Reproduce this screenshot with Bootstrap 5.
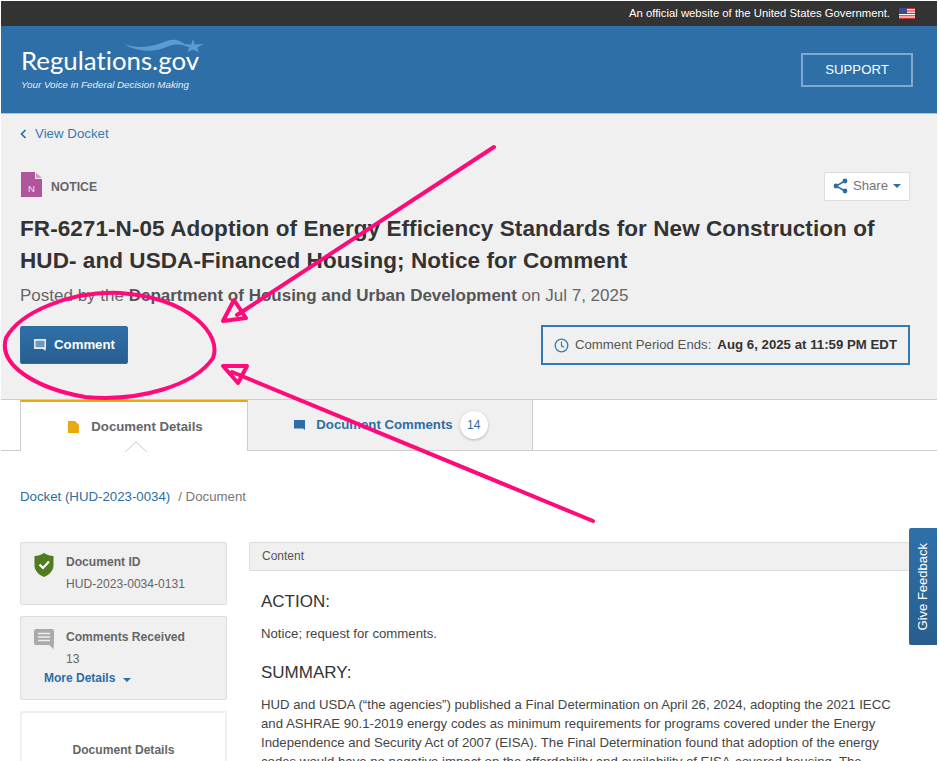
<!DOCTYPE html>
<html lang="en">
<head>
<meta charset="utf-8">
<title>Regulations.gov</title>
<link rel="stylesheet" href="https://cdn.jsdelivr.net/npm/bootstrap@5.3.0/dist/css/bootstrap.min.css">
<style>
html,body{height:761px;overflow:hidden}
body{font-family:"Liberation Sans",Arial,sans-serif;font-size:13.2px;color:#333;background:#fff;padding:1px 2px 0 1px;position:relative}
a{text-decoration:none;color:#2e6da4}
.gov-bar{height:25px;background:#333;color:#fff;font-size:11.3px;padding-right:22px;gap:9px}
.site-head{height:88px;background:#2e6fa8;padding:0 24px 0 20px;border-bottom:1px solid #a9c4dc}
.logo-box{position:relative;width:190px;color:#fff;margin-bottom:3px}
.logo-name{font-family:Lato,"Open Sans",sans-serif;font-weight:400;font-size:25.8px;line-height:30px;font-variant-ligatures:none}
.logo-tag{font-size:9.8px;font-style:italic;line-height:13px;color:#e6eef6;margin-top:3px}
.logo-swoosh{position:absolute;left:101px;top:-9px}
.support-btn{width:112px;height:34px;border:2px solid #82a9cd;color:#fff;font-size:13.2px;border-radius:0}
.hero{background:#f0f0f0;height:286px;padding:0 27px 0 19px;position:relative;border-bottom:1px solid #ccc}
.back-link{font-size:13.3px;padding-top:12px;line-height:16px}
.back-link a{color:#3a78b0}
.back-link svg{margin-right:8px}
.type-row{margin-top:31px;height:26px}
.type-icon{margin-bottom:4px}
.type-label{font-size:12.2px;color:#666;font-weight:700;margin-left:8px;margin-top:3px}
.share-btn{background:#fff;border:1px solid #ddd;height:29px;width:86px;font-size:13.2px;color:#777;gap:5px;border-radius:1px}
.tiny-caret{width:0;height:0;border-left:4px solid transparent;border-right:4px solid transparent;border-top:4px solid currentColor;display:inline-block}
.share-caret{color:#2e6da4}
.doc-title{font-size:22.5px;line-height:32px;font-weight:700;color:#333;margin:14px 0 0 0;letter-spacing:.07px}
.posted{font-size:17px;line-height:20px;color:#666;margin-top:9px}
.posted b{color:#555}
.act-row{margin-top:19px}
.comment-btn{width:108px;height:38px;background:linear-gradient(#2f70a9,#285e8e);border:1px solid #2e6da4;color:#fff;font-weight:700;font-size:13.2px;border-radius:2px;gap:7px}
.period{width:369px;height:40px;border:2px solid #337ab7;font-size:13.2px;color:#555;padding-left:11px;gap:6px;border-radius:0}
.period b{color:#333;margin-left:0;letter-spacing:.03px}
.tab-strip{height:51px;border-bottom:1px solid #ccc;padding-left:19px}
.tab-one{width:228px;background:#fff;border-top:2px solid #e8a90c;border-left:1px solid #ccc;border-right:1px solid #ccc;margin-bottom:-1px;color:#666;font-weight:700;font-size:13.2px;gap:12px;position:relative;padding-left:3px}
.tab-two{width:285px;background:#f0f0f0;border-right:1px solid #ccc;color:#2e6da4;font-weight:700;font-size:13.2px;gap:11px;padding-left:2px}
.count-pill{width:28px;height:28px;border-radius:50%;background:#fff;box-shadow:0 1px 3px rgba(0,0,0,.25);font-weight:400;font-size:12px;margin-left:-4px}
.tab-notch{position:absolute;left:104px;bottom:-1px;width:22px;height:11px}
.crumb{padding:37px 0 0 19px;font-size:13.25px;line-height:17px;color:#777}
.crumb a{margin-right:8px}
.doc-body{padding:37px 0 0 19px;gap:22px}
.side-col{width:207px;flex:none}
.info-box{background:#f0f0f0;border:1px solid #ddd;border-radius:2px;color:#666;font-size:12.1px}
.box-id{height:63px;margin-bottom:11px;padding:11px 0 0 13px;gap:12px}
.shield-icon{margin-top:-1px}
.box-cm{height:84px;margin-bottom:11px;padding:12px 0 0 13px;gap:12px;position:relative}
.info-name{font-weight:700;line-height:17px}
.info-val{line-height:17px;margin-top:5px}
.more-link{position:absolute;left:23px;top:53px;font-weight:700;font-size:12px;line-height:17px}
.box-det{height:80px;background:#fff;border:2px solid #f0f0f0;border-radius:2px;text-align:center;font-weight:700;font-size:12.1px;color:#666;padding-top:28px}
.main-col{flex:1;min-width:0}
.content-head{height:29px;background:#f0f0f0;border:1px solid #ddd;border-right:0;font-size:12px;color:#555;padding:4px 12px;border-radius:2px 0 0 2px;line-height:18px}
.content-txt{padding:21px 41px 0 12px;font-size:13.2px;line-height:19px;color:#444}
.content-txt h2{font-size:17px;font-weight:400;color:#333;line-height:20px;margin:0 0 12px}
.content-txt p{margin:0 0 20px}
.feedback{position:absolute;right:2px;top:528px;width:28px;height:117px;background:linear-gradient(#2f70a9,#285e8e);color:#fff;font-size:13px;border-radius:2px 0 0 2px;writing-mode:vertical-rl}
.feedback span{transform:rotate(180deg);display:block}
.marker-layer{position:absolute;left:0;top:0;pointer-events:none}
</style>
</head>
<body>
<div class="gov-bar d-flex align-items-center justify-content-end">
  <span>An official website of the United States Government.</span>
  <svg width="16" height="11" viewBox="0 0 16 11"><rect width="16" height="11" fill="#fff"/><g fill="#d8302f"><rect width="16" height="1.2"/><rect y="2.4" width="16" height="1.2"/><rect y="4.8" width="16" height="1.2"/><rect y="7.2" width="16" height="1.2"/><rect y="9.6" width="16" height="1.4"/></g><rect width="8" height="6" fill="#3c4a93"/></svg>
</div>
<header class="site-head d-flex align-items-center justify-content-between">
  <div class="logo-box">
    <svg class="logo-swoosh" width="84" height="22" viewBox="0 0 84 22"><path d="M2 8C16 13 30 11 42 6 51 2 58 3 66 11 57 7 50 8 42 12 29 17 13 15 2 8Z" fill="#5b9bd5"/><path d="M71 3l1.800 5.500 9-.5-6.500 3.500 1.500 5-5.500-3-6 2.500 2-4.500-5.500-3.500 7.500 .5Z" fill="#5b9bd5"/></svg>
    <div class="logo-name">Regulations.gov</div>
    <div class="logo-tag">Your Voice in Federal Decision Making</div>
  </div>
  <a class="support-btn d-flex align-items-center justify-content-center" href="#">SUPPORT</a>
</header>
<section class="hero">
  <div class="back-link"><a href="#"><svg width="7" height="10" viewBox="0 0 7 10"><path d="M5.500 1 1.500 5l4 4" fill="none" stroke="#2e6da4" stroke-width="1.700"/></svg>View Docket</a></div>
  <div class="type-row d-flex align-items-center justify-content-between">
    <div class="d-flex align-items-center">
      <svg class="type-icon" width="23" height="25" viewBox="0 0 23 25"><path d="M1 0h14v7h7v18H1Z" fill="#b0559c"/><path d="M16 0.500 22 6h-6Z" fill="#cf9cc5"/><text x="11.500" y="20" text-anchor="middle" font-size="9.500" fill="#f3e3ef" font-family="Liberation Sans">N</text></svg>
      <span class="type-label">NOTICE</span>
    </div>
    <button class="share-btn d-flex align-items-center justify-content-center p-0" type="button">
      <svg width="15" height="16" viewBox="0 0 15 16"><path d="M12 3 3 8l9 5" fill="none" stroke="#2e6da4" stroke-width="1.500"/><circle cx="12" cy="3" r="2.400" fill="#2e6da4"/><circle cx="3" cy="8" r="2.400" fill="#2e6da4"/><circle cx="12" cy="13" r="2.400" fill="#2e6da4"/></svg>
      <span>Share</span><span class="tiny-caret share-caret"></span>
    </button>
  </div>
  <h1 class="doc-title">FR-6271-N-05 Adoption of Energy Efficiency Standards for New Construction of HUD- and USDA-Financed Housing; Notice for Comment</h1>
  <div class="posted">Posted by the <b>Department of Housing and Urban Development</b> on Jul 7, 2025</div>
  <div class="act-row d-flex align-items-center justify-content-between">
    <button class="comment-btn d-flex align-items-center justify-content-center p-0" type="button">
      <svg width="14" height="14" viewBox="0 0 14 14"><path d="M1 1h12v10h-.5v2l-2.500-2H1Z" fill="#e6edf4"/><rect x="2.500" y="2.700" width="9" height="6.500" fill="#6f98bf"/></svg>Comment
    </button>
    <div class="period d-flex align-items-center">
      <svg width="15" height="15" viewBox="0 0 15 15"><circle cx="7.500" cy="7.500" r="6.300" fill="none" stroke="#337ab7" stroke-width="1.300"/><path d="M7.500 3.500v4.300l2.600 1.500" fill="none" stroke="#337ab7" stroke-width="1.200"/></svg>
      <span>Comment Period Ends:</span><b>Aug 6, 2025 at 11:59 PM EDT</b>
    </div>
  </div>
</section>
<nav class="tab-strip d-flex">
  <div class="tab-one d-flex align-items-center justify-content-center">
    <svg width="11" height="12" viewBox="0 0 11 12"><path d="M0 0h7l4 4v8H0Z" fill="#e8a90c"/></svg>
    <span>Document Details</span>
    <svg class="tab-notch" viewBox="0 0 22 11"><path d="M0 11 11 1l11 10" fill="#fff" stroke="#ccc"/></svg>
  </div>
  <a class="tab-two d-flex align-items-center justify-content-center" href="#">
    <svg width="11" height="11" viewBox="0 0 11 11"><path d="M0 0h11v10l-2-1.500H0Z" fill="#2e6da4"/></svg>
    <span>Document Comments</span>
    <span class="count-pill d-flex align-items-center justify-content-center">14</span>
  </a>
</nav>
<div class="crumb"><a href="#">Docket (HUD-2023-0034)</a>/ Document</div>
<div class="doc-body d-flex">
  <aside class="side-col">
    <div class="info-box box-id d-flex">
      <svg class="shield-icon" width="20" height="24" viewBox="0 0 20 24"><path d="M10 0c3 2 6 3 9.500 3v9c0 6-4 9.500-9.500 12C4.500 21.500.5 18 .5 12V3C4 3 7 2 10 0Z" fill="#4e7d1e"/><path d="M5.500 11.500 9 15l6-6.500" fill="none" stroke="#fff" stroke-width="2.200"/></svg>
      <div><div class="info-name">Document ID</div><div class="info-val">HUD-2023-0034-0131</div></div>
    </div>
    <div class="info-box box-cm d-flex">
      <svg width="20" height="20" viewBox="0 0 20 20"><path d="M2 0h16a2 2 0 0 1 2 2v12l-.5 6-4.500-4H2a2 2 0 0 1-2-2V2a2 2 0 0 1 2-2Z" fill="#aaa"/><path d="M4 4.500h12M4 8h12M4 11.500h12" stroke="#f0f0f0" stroke-width="1.300"/></svg>
      <div><div class="info-name">Comments Received</div><div class="info-val">13</div></div>
      <a class="more-link" href="#">More Details <span class="tiny-caret ms-1"></span></a>
    </div>
    <div class="box-det">Document Details</div>
  </aside>
  <main class="main-col">
    <div class="content-head">Content</div>
    <div class="content-txt">
      <h2>ACTION:</h2>
      <p>Notice; request for comments.</p>
      <h2>SUMMARY:</h2>
      <p>HUD and USDA (“the agencies”) published a Final Determination on April 26, 2024, adopting the 2021 IECC and ASHRAE 90.1-2019 energy codes as minimum requirements for programs covered under the Energy Independence and Security Act of 2007 (EISA). The Final Determination found that adoption of the energy codes would have no negative impact on the affordability and availability of EISA-covered housing. The</p>
    </div>
  </main>
</div>
<a class="feedback d-flex align-items-center justify-content-center" href="#"><span>Give Feedback</span></a>
<svg class="marker-layer" width="939" height="761" viewBox="0 0 939 761" fill="none" stroke="#ff0a78" stroke-width="4" stroke-linecap="round" stroke-linejoin="round">
  <path d="M494 147 237 315"/>
  <path d="M223 321 234 300 246 318Z"/>
  <path d="M593 521 232 372"/>
  <path d="M223 366 247 366 238 383Z"/>
  <path d="M120 293C70 291 20 312 6 338 -2 365 35 388 85 397 140 402 195 385 213 358 222 335 190 298 120 293Z"/>
</svg>
</body>
</html>
